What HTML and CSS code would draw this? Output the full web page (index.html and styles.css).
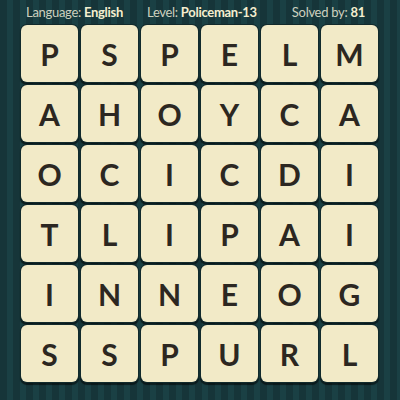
FILE: index.html
```html
<!DOCTYPE html>
<html>
<head>
<meta charset="utf-8">
<link rel="stylesheet" href="styles.css">
</head>
<body>
<div class="page">
  <div class="header">
    <div class="info info-lang"><span class="label">Language:</span> <span class="value">English</span></div>
    <div class="info info-level"><span class="label">Level:</span> <span class="value">Policeman-13</span></div>
    <div class="info info-solved"><span class="label">Solved by:</span> <span class="value">81</span></div>
  </div>
  <div class="grid">
    <div class="tile">P</div><div class="tile">S</div><div class="tile">P</div><div class="tile">E</div><div class="tile">L</div><div class="tile">M</div>
    <div class="tile">A</div><div class="tile">H</div><div class="tile">O</div><div class="tile">Y</div><div class="tile">C</div><div class="tile">A</div>
    <div class="tile">O</div><div class="tile">C</div><div class="tile">I</div><div class="tile">C</div><div class="tile">D</div><div class="tile">I</div>
    <div class="tile">T</div><div class="tile">L</div><div class="tile">I</div><div class="tile">P</div><div class="tile">A</div><div class="tile">I</div>
    <div class="tile">I</div><div class="tile">N</div><div class="tile">N</div><div class="tile">E</div><div class="tile">O</div><div class="tile">G</div>
    <div class="tile">S</div><div class="tile">S</div><div class="tile">P</div><div class="tile">U</div><div class="tile">R</div><div class="tile">L</div>
  </div>
</div>
</body>
</html>
```
FILE: styles.css
```css
html, body {
  margin: 0;
  padding: 0;
}
body {
  width: 400px;
  height: 400px;
  overflow: hidden;
  background-color: #17393d;
  background-image: repeating-linear-gradient(90deg, #163539 0px, #163539 7px, #1a4044 7px, #1a4044 13px);
  font-family: Lato, "Liberation Sans", sans-serif;
}
.page {
  padding: 0 0 0 21px;
}
.header {
  display: flex;
  height: 25px;
  align-items: center;
  padding-left: 5px;
  font-size: 13px;
  letter-spacing: -0.3px;
  line-height: 1;
}
.info-level {
  margin-left: 24px;
}
.info-solved {
  margin-left: 35px;
}
.label {
  color: #cdd0bf;
}
.value {
  color: #f4eecf;
  font-weight: 700;
}
.grid {
  display: grid;
  grid-template-columns: repeat(6, 57px);
  grid-auto-rows: 57px;
  gap: 3px;
}
.tile {
  background: #f2eac7;
  border-radius: 6px;
  box-shadow: 0 0 0 1px #122a2c, 0 2px 1px 1px rgba(0, 0, 0, 0.55);
  display: flex;
  align-items: center;
  justify-content: center;
  color: #2c2721;
  font-size: 30px;
  font-weight: 700;
}
```
